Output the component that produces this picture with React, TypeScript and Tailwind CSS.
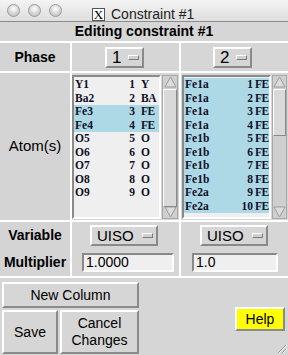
import React from 'react';

// Tk-style constraint editor window (Aqua title bar, X11 widgets)

const raised = 'border-2 border-t-white border-l-white border-b-[#8a8a8a] border-r-[#8a8a8a]';
const sunken = 'border-2 border-t-[#8a8a8a] border-l-[#8a8a8a] border-b-white border-r-white';

const phase1 = [
  { name: 'Y1', num: 1, type: 'Y', sel: false },
  { name: 'Ba2', num: 2, type: 'BA', sel: false },
  { name: 'Fe3', num: 3, type: 'FE', sel: true },
  { name: 'Fe4', num: 4, type: 'FE', sel: true },
  { name: 'O5', num: 5, type: 'O', sel: false },
  { name: 'O6', num: 6, type: 'O', sel: false },
  { name: 'O7', num: 7, type: 'O', sel: false },
  { name: 'O8', num: 8, type: 'O', sel: false },
  { name: 'O9', num: 9, type: 'O', sel: false },
];

const phase2 = [
  { name: 'Fe1a', num: 1, type: 'FE', sel: true },
  { name: 'Fe1a', num: 2, type: 'FE', sel: true },
  { name: 'Fe1a', num: 3, type: 'FE', sel: true },
  { name: 'Fe1a', num: 4, type: 'FE', sel: true },
  { name: 'Fe1b', num: 5, type: 'FE', sel: true },
  { name: 'Fe1b', num: 6, type: 'FE', sel: true },
  { name: 'Fe1b', num: 7, type: 'FE', sel: true },
  { name: 'Fe1b', num: 8, type: 'FE', sel: true },
  { name: 'Fe2a', num: 9, type: 'FE', sel: true },
  { name: 'Fe2a', num: 10, type: 'FE', sel: true },
];

function Light() {
  return (
    <div className="w-[13px] h-[13px] rounded-full border border-[#9a9a9a] bg-[radial-gradient(circle_at_50%_35%,#ffffff,#d4d4d4_55%,#b8b8b8)]" />
  );
}

function MenuBtn({ label, size }: { label: string; size: string }) {
  return (
    <div className={`flex items-center h-[21px] pl-[5px] pr-[3px] gap-[7px] bg-[#d6d6d6] ${raised}`}>
      <span className={size}>{label}</span>
      <span className="w-[11px] h-[5px] border border-t-white border-l-white border-b-[#7a7a7a] border-r-[#7a7a7a] bg-[#d0d0d0]" />
    </div>
  );
}

function Arrow({ up }: { up: boolean }) {
  return (
    <svg width="13" height="12" viewBox="0 0 13 12">
      <polygon
        points={up ? '6.5,1 12,11 1,11' : '1,1 12,1 6.5,11'}
        fill="#dcdcdc"
        stroke="#9c9c9c"
        strokeWidth="1"
      />
    </svg>
  );
}

function Scrollbar({ sliderTop, sliderH, w }: { sliderTop: number; sliderH: number; w: string }) {
  return (
    <div className={`${w} shrink-0 flex flex-col items-center bg-[#cfcfcf] border border-[#a8a8a8]`}>
      <Arrow up />
      <div className="relative flex-1 w-full">
        <div
          className="absolute left-0 right-0 bg-[#d9d9d9] border border-t-white border-l-white border-b-[#8a8a8a] border-r-[#8a8a8a]"
          style={{ top: sliderTop, height: sliderH }}
        />
      </div>
      <Arrow up={false} />
    </div>
  );
}

type Row = { name: string; num: number; type: string; sel: boolean };

function ListBox({
  rows,
  nameW,
  numW,
  typePad,
  sliderTop,
  sliderH,
  sbW,
}: {
  rows: Row[];
  nameW: string;
  numW: string;
  typePad: string;
  sliderTop: number;
  sliderH: number;
  sbW: string;
}) {
  return (
    <div className="flex h-full gap-[1px]">
      <div className={`flex-1 min-w-0 overflow-hidden bg-[#efefef] pt-[1px] ${sunken}`}>
        {rows.map((r, i) => (
          <div
            key={i}
            className={`flex h-[13.5px] items-center pl-[1px] whitespace-nowrap font-['Liberation_Serif',serif] font-bold text-[11.5px] text-[#101028] ${r.sel ? 'bg-[#add8e6]' : ''}`}
          >
            <span className={`${nameW} shrink-0`}>{r.name}</span>
            <span className={`${numW} shrink-0 text-right`}>{r.num}</span>
            <span className={`${typePad} shrink-0 tracking-[-0.5px]`}>{r.type}</span>
          </div>
        ))}
      </div>
      <Scrollbar sliderTop={sliderTop} sliderH={sliderH} w={sbW} />
    </div>
  );
}

function Btn({ children, className }: { children: React.ReactNode; className?: string }) {
  return (
    <div className={`flex items-center justify-center text-center text-[14px] leading-[17px] bg-[#d6d6d6] ${raised} ${className ?? ''}`}>
      {children}
    </div>
  );
}

export default function App() {
  return (
    <div className="relative w-[288px] h-[355px] overflow-hidden bg-[#d6d6d6] text-black font-['Liberation_Sans',Arial,sans-serif]">
      {/* title bar */}
      <div className="relative flex items-center h-[22px] border-b border-[#8c8c8c] bg-[linear-gradient(#f4f4f4,#dedede)]">
        <div className="flex items-center gap-[8px] pl-[7px]">
          <Light />
          <Light />
          <Light />
        </div>
        <div className="absolute left-[92px] top-[4px] flex items-center gap-[6px]">
          <span className="flex items-center justify-center w-[13px] h-[13px] border border-[#555] bg-white font-['Liberation_Serif',serif] text-[13px] leading-[11px]">
            X
          </span>
          <span className="text-[14px] text-[#222]">Constraint #1</span>
        </div>
      </div>

      {/* heading */}
      <div className="h-[19px] flex items-center justify-center font-bold text-[14px]">Editing constraint #1</div>

      <div className="flex flex-col gap-[2px] bg-white pt-[2px] pb-[2px]">
        {/* Phase */}
        <div className="grid grid-cols-[70px_107px_107px] gap-x-[2px] h-[28px]">
          <div className="bg-[#d4d4d4] flex items-center justify-center font-bold text-[14px]">Phase</div>
          <div className="bg-[#d6d6d6] flex items-center pl-[33px]">
            <MenuBtn label="1" size="text-[17px] leading-[17px]" />
          </div>
          <div className="bg-[#d6d6d6] flex items-center pl-[32px]">
            <MenuBtn label="2" size="text-[17px] leading-[17px]" />
          </div>
        </div>

        {/* Atoms */}
        <div className="grid grid-cols-[70px_107px_107px] gap-x-[2px] h-[147px]">
          <div className="bg-[#d4d4d4] flex items-center justify-center text-[15px]">Atom(s)</div>
          <div className="bg-[#d6d6d6] pt-[2px] pb-[1px] pr-[1px]">
            <ListBox rows={phase1} nameW="w-[35px]" numW="w-[25px]" typePad="pl-[6px]" sliderTop={1} sliderH={118} sbW="w-[16px]" />
          </div>
          <div className="bg-[#d6d6d6] pt-[2px] pb-[1px] pl-[1px] pr-[1px]">
            <ListBox rows={phase2} nameW="w-[42px]" numW="w-[26px]" typePad="pl-[2px]" sliderTop={1} sliderH={47} sbW="w-[15px]" />
          </div>
        </div>

        {/* Variable + Multiplier */}
        <div className="flex flex-col bg-[#d6d6d6]">
          <div className="grid grid-cols-[70px_107px_107px] gap-x-[2px] h-[27px] bg-white">
            <div className="bg-[#d4d4d4] flex items-center justify-center font-bold text-[14px]">Variable</div>
            <div className="bg-[#d6d6d6] flex items-center pl-[18px]">
              <MenuBtn label="UISO" size="text-[15px] leading-[17px] pr-[1px]" />
            </div>
            <div className="bg-[#d6d6d6] flex items-center pl-[19px]">
              <MenuBtn label="UISO" size="text-[15px] leading-[17px] pr-[1px]" />
            </div>
          </div>
          <div className="grid grid-cols-[70px_107px_107px] gap-x-[2px] h-[27px] bg-white">
            <div className="bg-[#d4d4d4] flex items-center justify-center font-bold text-[14px]">Multiplier</div>
            <div className="bg-[#d6d6d6] flex items-center pl-[10px]">
              <div className={`w-[92px] h-[19px] flex items-center pl-[2px] text-[14px] bg-[#efefef] ${sunken}`}>1.0000</div>
            </div>
            <div className="bg-[#d6d6d6] flex items-center pl-[11px]">
              <div className={`w-[86px] h-[19px] flex items-center pl-[2px] text-[14px] bg-[#efefef] ${sunken}`}>1.0</div>
            </div>
          </div>
        </div>
      </div>

      {/* buttons */}
      <div className="flex pt-[4px] pl-[2px]">
        <div className="flex flex-col gap-[2px] w-[137px]">
          <Btn className="h-[26px]">New Column</Btn>
          <div className="flex gap-[2px] h-[44px]">
            <Btn className="w-[56px]">Save</Btn>
            <Btn className="flex-1">
              Cancel
              <br />
              Changes
            </Btn>
          </div>
        </div>
        <div className="ml-auto mt-[25px] mr-[3px]">
          <div className={`w-[50px] h-[24px] flex items-center justify-center text-[14px] bg-[#ffff00] ${raised}`}>Help</div>
        </div>
      </div>

      {/* resize grip */}
      <svg className="absolute right-[1px] bottom-[1px]" width="12" height="12" viewBox="0 0 12 12">
        <line x1="11" y1="3" x2="3" y2="11" stroke="#8a8a8a" />
        <line x1="11" y1="7" x2="7" y2="11" stroke="#8a8a8a" />
        <line x1="12" y1="3" x2="4" y2="11" stroke="#fff" />
        <line x1="12" y1="7" x2="8" y2="11" stroke="#fff" />
      </svg>
    </div>
  );
}
